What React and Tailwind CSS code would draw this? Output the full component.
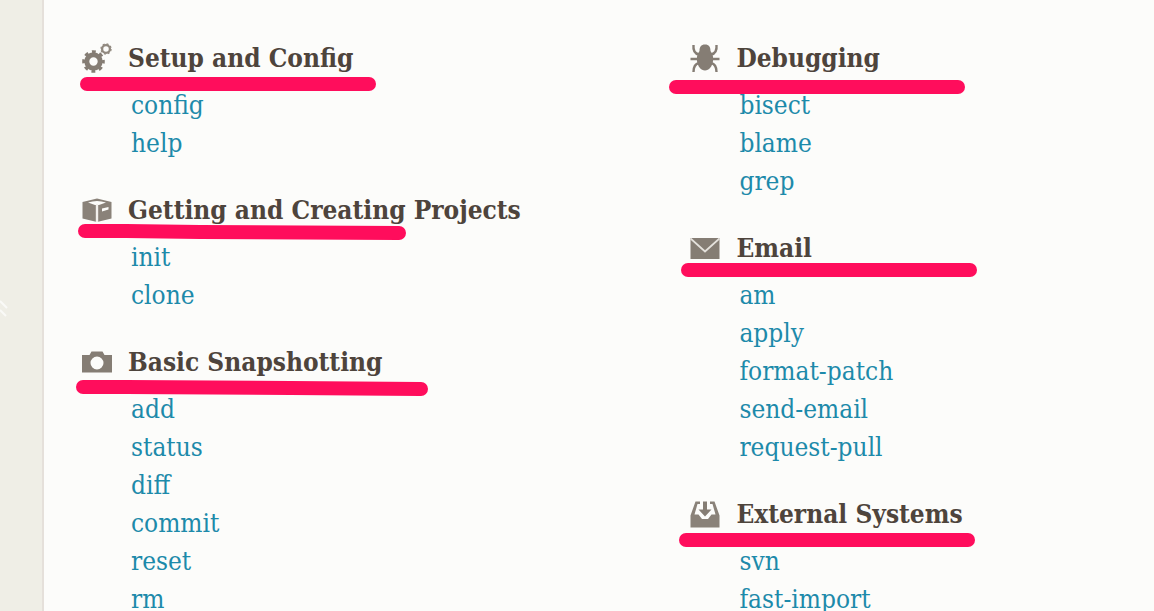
import React from "react";

function Gears() {
  return (
    <svg viewBox="0 0 30 30" className="h-[30px] w-[30px]" fill="none" stroke="#857d74">
      <circle cx="11.500" cy="18.500" r="6.700" strokeWidth="5" />
      <circle cx="11.500" cy="18.500" r="9.800" strokeWidth="3" strokeDasharray="3.850 3.850" strokeDashoffset="1.900" />
      <circle cx="24" cy="6" r="3.900" strokeWidth="2.300" stroke="#91897f" />
      <circle cx="24" cy="6" r="5.100" strokeWidth="1.200" strokeDasharray="2 2" stroke="#91897f" />
    </svg>
  );
}

function Box() {
  return (
    <svg viewBox="0 0 30 30" className="h-[30px] w-[30px]">
      <path d="M0.500 7 L15 3.500 L29.500 7 V23.500 L15 27 L0.500 23.500Z" fill="#8a8279" />
      <path d="M6 7.500 Q15 4.500 24 7.500 L17 10 H13Z" fill="#fcfcfa" />
      <path d="M15 9 V27" stroke="#f2f0ec" strokeWidth="2.400" />
      <path d="M20 13.500 L26.500 12 V14.500 L20 16.500Z" fill="#fcfcfa" />
    </svg>
  );
}

function Camera() {
  return (
    <svg viewBox="0 0 30 30" className="h-[30px] w-[30px]">
      <path
        fillRule="evenodd"
        fill="#857d74"
        d="M0 8 H7.500 L9.500 4.500 H20.500 L22.500 8 H30 V25.500 H0Z M15 9.500 A6.500 6.500 0 1 0 15 22.500 A6.500 6.500 0 1 0 15 9.500Z"
      />
    </svg>
  );
}

function Bug() {
  return (
    <svg viewBox="0 0 30 30" className="h-[30px] w-[30px]">
      <path
        d="M15 1.500 C19 1.500 20.500 4 20.500 8 C23 11 23.500 15 23 18 C22.300 23.500 19 27.500 15 27.500 C11 27.500 7.700 23.500 7 18 C6.500 15 7 11 9.500 8 C9.500 4 11 1.500 15 1.500Z"
        fill="#857d74"
      />
      <path
        d="M9 11.500 C4 10.500 3 7 3.500 2 M21 11.500 C26 10.500 27 7 26.500 2 M8 16 H0.500 M22 16 H29.500 M9 20 C4.500 21 3.500 24 3.500 29 M21 20 C25.500 21 26.500 24 26.500 29"
        fill="none"
        stroke="#857d74"
        strokeWidth="2.400"
      />
    </svg>
  );
}

function Envelope() {
  return (
    <svg viewBox="0 0 30 30" className="h-[30px] w-[30px]">
      <rect x="0.500" y="5" width="29" height="21" fill="#857d74" />
      <path d="M0.500 5.500 L15 18.500 L29.500 5.500" fill="none" stroke="#e4e1dc" strokeWidth="1.800" />
    </svg>
  );
}

function Inbox() {
  return (
    <svg viewBox="0 0 30 30" className="h-[30px] w-[30px]">
      <path
        d="M5.500 2.500 H10 V5 H7.500 L4.500 15.500 H8.500 L12 20 H18 L21.500 15.500 H25.500 L22.500 5 H20 V2.500 H24.500 L29.500 16.500 V28.500 H0.500 V16.500Z"
        fill="#8a8279"
      />
      <path d="M13 2.500 H17 V10.500 H21.500 L15 17.500 L8.500 10.500 H13Z" fill="#857d74" />
    </svg>
  );
}

function Mark({ box, view, d }) {
  return (
    <svg aria-hidden="true" viewBox={view} className={`pointer-events-none absolute ${box}`}>
      <path d={d} fill="none" stroke="#ff0d5c" strokeWidth="14" strokeLinecap="round" />
    </svg>
  );
}

const flat = { view: "0 0 296 16", d: "M7 8 H289" };

const left = [
  {
    title: "Setup and Config",
    Icon: Gears,
    links: ["config", "help"],
    mark: { ...flat, box: "-left-[2px] top-[37px] h-[16px] w-[296px]" },
  },
  {
    title: "Getting and Creating Projects",
    Icon: Box,
    links: ["init", "clone"],
    mark: { view: "0 0 328 16", d: "M7 7 H48 L122 8 L321 9", box: "-left-[4px] top-[33px] h-[16px] w-[328px]" },
  },
  {
    title: "Basic Snapshotting",
    Icon: Camera,
    links: ["add", "status", "diff", "commit", "reset", "rm"],
    mark: { view: "0 0 352 16", d: "M7 7 H50 L215 8 L345 9", box: "-left-[6px] top-[37px] h-[16px] w-[352px]" },
  },
];

const right = [
  {
    title: "Debugging",
    Icon: Bug,
    links: ["bisect", "blame", "grep"],
    mark: { ...flat, box: "-left-[21px] top-[40px] h-[16px] w-[296px]" },
  },
  {
    title: "Email",
    Icon: Envelope,
    links: ["am", "apply", "format-patch", "send-email", "request-pull"],
    mark: { ...flat, box: "-left-[9px] top-[33px] h-[16px] w-[296px]" },
  },
  {
    title: "External Systems",
    Icon: Inbox,
    links: ["svn", "fast-import"],
    mark: { ...flat, box: "-left-[11px] top-[37px] h-[16px] w-[296px]" },
  },
];

function Section({ title, Icon, links, mark }) {
  return (
    <section>
      <div className="relative flex h-[38px] items-center gap-4">
        <Icon />
        <h3 className="whitespace-nowrap text-[26px] font-bold leading-[38px] text-[#4e443c]">{title}</h3>
        <Mark {...mark} />
      </div>
      <ul className="mt-[9px] pl-[49px]">
        {links.map((name) => (
          <li key={name} className="text-[26px] leading-[38px]">
            <a href={`#${name}`} className="text-[#1d8aaa]">{name}</a>
          </li>
        ))}
      </ul>
    </section>
  );
}

function Column({ sections }) {
  return (
    <div className="flex flex-col gap-[29px]">
      {sections.map((s) => (
        <Section key={s.title} {...s} />
      ))}
    </div>
  );
}

export default function App() {
  return (
    <div className="flex min-h-screen bg-[#efeee6] font-['DejaVu_Serif_Condensed','DejaVu_Serif',serif]">
      <aside className="flex w-[42px] shrink-0 items-center">
        <svg viewBox="0 0 8 24" className="h-6 w-2" fill="none" stroke="#fafaf7" strokeWidth="2">
          <path d="M0 4 L7 11 M0 13 L6 19" />
        </svg>
      </aside>
      <main className="grid flex-1 grid-cols-[21fr_16fr] content-start border-l-2 border-[#e5e0da] bg-[#fcfcfa] pl-[38px] pt-[39px]">
        <Column sections={left} />
        <Column sections={right} />
      </main>
    </div>
  );
}
